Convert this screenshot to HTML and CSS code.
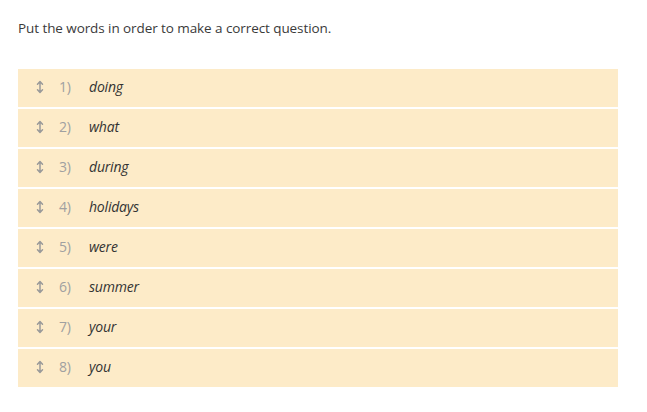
FILE: index.html
```html
<!DOCTYPE html>
<html>
<head>
<meta charset="utf-8">
<link rel="stylesheet" href="styles.css">
</head>
<body>
<div class="page">
  <p class="prompt">Put the words in order to make a correct question.</p>
  <ol class="list">
    <li class="row"><svg class="handle" viewBox="0 0 8 14"><path d="M4 2v10M1.5 4.2 4 1.5 6.5 4.2M1.5 9.8 4 12.5 6.5 9.8"/></svg><span class="num">1)</span><span class="word">doing</span></li>
    <li class="row"><svg class="handle" viewBox="0 0 8 14"><path d="M4 2v10M1.5 4.2 4 1.5 6.5 4.2M1.5 9.8 4 12.5 6.5 9.8"/></svg><span class="num">2)</span><span class="word">what</span></li>
    <li class="row"><svg class="handle" viewBox="0 0 8 14"><path d="M4 2v10M1.5 4.2 4 1.5 6.5 4.2M1.5 9.8 4 12.5 6.5 9.8"/></svg><span class="num">3)</span><span class="word">during</span></li>
    <li class="row"><svg class="handle" viewBox="0 0 8 14"><path d="M4 2v10M1.5 4.2 4 1.5 6.5 4.2M1.5 9.8 4 12.5 6.5 9.8"/></svg><span class="num">4)</span><span class="word">holidays</span></li>
    <li class="row"><svg class="handle" viewBox="0 0 8 14"><path d="M4 2v10M1.5 4.2 4 1.5 6.5 4.2M1.5 9.8 4 12.5 6.5 9.8"/></svg><span class="num">5)</span><span class="word">were</span></li>
    <li class="row"><svg class="handle" viewBox="0 0 8 14"><path d="M4 2v10M1.5 4.2 4 1.5 6.5 4.2M1.5 9.8 4 12.5 6.5 9.8"/></svg><span class="num">6)</span><span class="word">summer</span></li>
    <li class="row"><svg class="handle" viewBox="0 0 8 14"><path d="M4 2v10M1.5 4.2 4 1.5 6.5 4.2M1.5 9.8 4 12.5 6.5 9.8"/></svg><span class="num">7)</span><span class="word">your</span></li>
    <li class="row"><svg class="handle" viewBox="0 0 8 14"><path d="M4 2v10M1.5 4.2 4 1.5 6.5 4.2M1.5 9.8 4 12.5 6.5 9.8"/></svg><span class="num">8)</span><span class="word">you</span></li>
  </ol>
</div>
</body>
</html>
```
FILE: styles.css
```css
html, body {
  margin: 0;
  padding: 0;
  background: #ffffff;
}
body {
  font-family: "Open Sans", Lato, "Liberation Sans", sans-serif;
  color: #333333;
}
.page {
  padding: 18px 29px 0 18px;
  width: 600px;
}
.prompt {
  margin: 0;
  font-size: 13.5px;
  line-height: 20px;
  letter-spacing: -0.08px;
  color: #3a3a3a;
}
.list {
  list-style: none;
  margin: 31px 0 0 0;
  padding: 0;
  display: flex;
  flex-direction: column;
  gap: 2px;
}
.row {
  height: 38px;
  background: #fdebc8;
  display: flex;
  align-items: center;
  font-size: 14px;
  padding-bottom: 3px;
  box-sizing: border-box;
}
.handle {
  width: 8px;
  height: 14px;
  margin-left: 18px;
  fill: none;
  stroke: #9a9a9a;
  stroke-width: 1.5;
  stroke-linecap: round;
  stroke-linejoin: round;
}
.num {
  margin-left: 15px;
  width: 30px;
  color: #a0a0a0;
  letter-spacing: -0.3px;
}
.word {
  font-style: italic;
  color: #333333;
  letter-spacing: -0.2px;
}
```
